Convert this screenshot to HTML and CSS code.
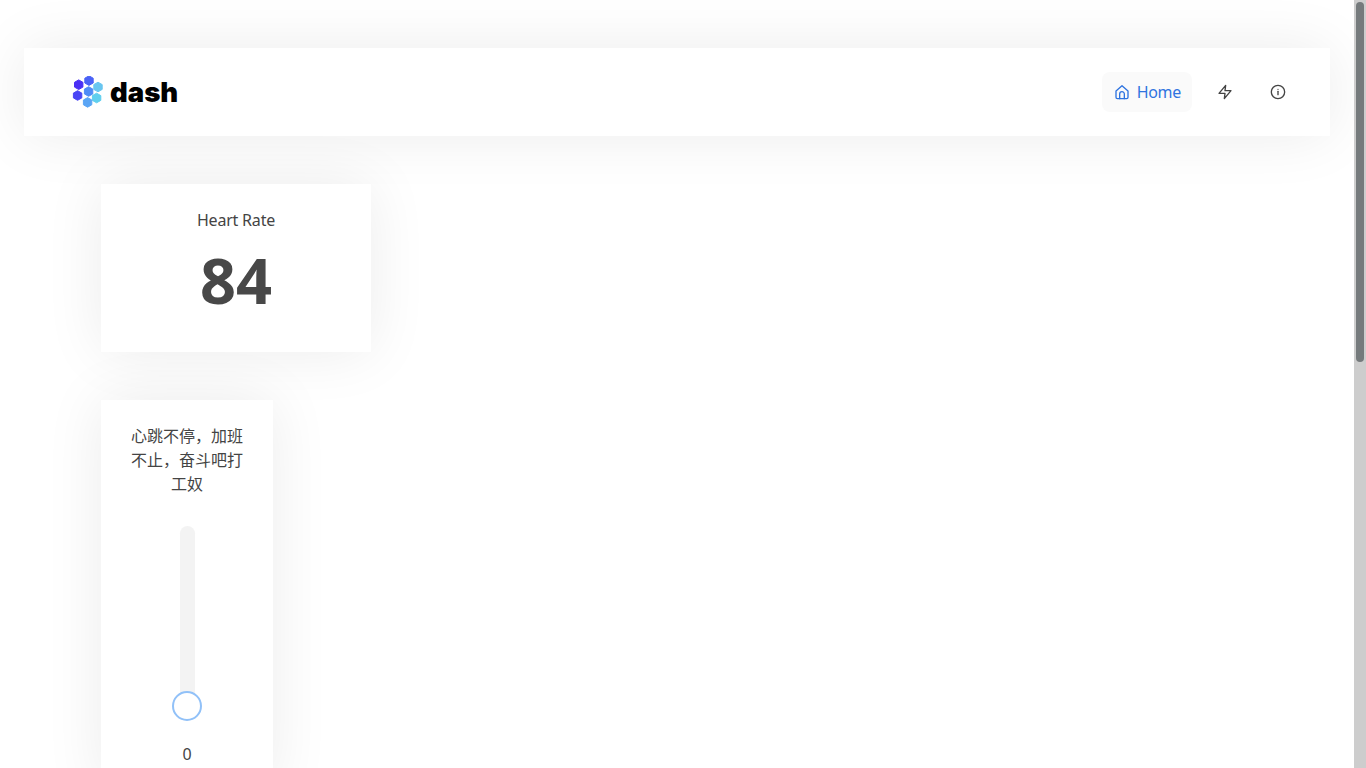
FILE: index.html
```html
<!DOCTYPE html>
<html lang="en">
<head>
  <meta charset="UTF-8">
  <meta name="viewport" content="width=device-width, initial-scale=1.0">
  <title>dash</title>
  <link rel="stylesheet" href="styles.css">
</head>
<body>
  <div class="page">
    <header class="navbar">
      <a class="brand" href="#">
        <svg class="brand-logo" width="32" height="32" viewBox="0 0 32 32">
          <defs>
            <polygon id="hex" points="0,-4.8 4.2,-2.4 4.2,2.4 0,4.8 -4.2,2.4 -4.2,-2.4" stroke-width="1" stroke-linejoin="round"/>
          </defs>
          <use href="#hex" x="6.7" y="8.7" fill="#4a2ff5" stroke="#4a2ff5"/>
          <use href="#hex" x="17" y="4.6" fill="#4a62f6" stroke="#4a62f6"/>
          <use href="#hex" x="26" y="11" fill="#69c6f0" stroke="#69c6f0"/>
          <use href="#hex" x="16.6" y="15.5" fill="#4f8cf6" stroke="#4f8cf6"/>
          <use href="#hex" x="5.6" y="19.5" fill="#4a45f5" stroke="#4a45f5"/>
          <use href="#hex" x="24.6" y="22" fill="#5fcfee" stroke="#5fcfee"/>
          <use href="#hex" x="15.6" y="26.4" fill="#5aa5f5" stroke="#5aa5f5"/>
        </svg>
        <span class="brand-name">dash</span>
      </a>
      <nav class="nav">
        <a class="nav-item active" href="#">
          <svg width="16" height="16" viewBox="0 0 24 24" fill="none" stroke="currentColor" stroke-width="2" stroke-linecap="round" stroke-linejoin="round">
            <path d="M3 10.5 12 2.5l9 8V20a2 2 0 0 1-2 2H5a2 2 0 0 1-2-2z"/>
            <path d="M8.5 22v-7a3.5 3.5 0 0 1 7 0v7"/>
          </svg>
          <span class="nav-label">Home</span>
        </a>
        <a class="nav-item icon-only" href="#">
          <svg width="16" height="16" viewBox="0 0 24 24" fill="none" stroke="currentColor" stroke-width="2" stroke-linecap="round" stroke-linejoin="round">
            <path d="M13 2 3 14h9l-1 8 10-12h-9l1-8z"/>
          </svg>
        </a>
        <a class="nav-item icon-only" href="#">
          <svg width="16" height="16" viewBox="0 0 24 24" fill="none" stroke="currentColor" stroke-width="2" stroke-linecap="round" stroke-linejoin="round">
            <circle cx="12" cy="12" r="10"/>
            <path d="M12 16v-5"/>
            <path d="M12 8h.01"/>
          </svg>
        </a>
      </nav>
    </header>

    <main class="content">
      <section class="card stat-card">
        <p class="card-title">Heart Rate</p>
        <p class="stat-value">84</p>
      </section>

      <section class="card slider-card">
        <p class="card-title">心跳不停，加班不止，奋斗吧打工奴</p>
        <div class="slider">
          <div class="slider-track"></div>
          <div class="slider-handle"></div>
        </div>
        <p class="slider-value">0</p>
      </section>
    </main>
  </div>

  <div class="scrollbar">
    <div class="scrollbar-thumb"></div>
  </div>
</body>
</html>
```

FILE: styles.css
```css
body {
  display: flex;
  margin: 0;
  height: 100vh;
  overflow: hidden;
  background: #fff;
  color: #444;
  font-family: "Noto Sans", "Noto Sans CJK SC", sans-serif;
  font-size: 16px;
  line-height: 24px;
}
p {
  margin: 0;
}
a {
  text-decoration: none;
  color: inherit;
}
.page {
  flex: 1;
  min-width: 0;
  padding: 48px 24px 0;
  overflow: hidden;
}
.scrollbar {
  flex: none;
  box-sizing: border-box;
  width: 12px;
  padding: 2px 2px 0;
  background: #cdcdcd;
}
.scrollbar-thumb {
  height: 360px;
  background: #757a7c;
  border-radius: 4px;
}
.navbar {
  display: flex;
  align-items: center;
  justify-content: space-between;
  height: 88px;
  padding: 0 32px 0 48px;
  background: #fff;
  box-shadow: 0 0 60px rgba(0,0,0,0.08);
}
.brand {
  display: flex;
  align-items: center;
  gap: 6px;
}
.brand-name {
  font-family: Inter, sans-serif;
  font-size: 27.5px;
  font-weight: 900;
  color: #000;
}
.nav {
  display: flex;
  align-items: center;
  gap: 13px;
}
.nav-item {
  display: flex;
  align-items: center;
  justify-content: center;
  gap: 7px;
  height: 40px;
  padding: 0 11px 0 12px;
  border-radius: 8px;
  color: #444;
}
.nav-label {
  letter-spacing: -0.3px;
}
.nav-item.active {
  background: #fafafa;
  color: #2f74e0;
}
.icon-only {
  width: 40px;
  padding: 0;
}
.content {
  display: flex;
  flex-direction: column;
  align-items: flex-start;
  gap: 48px;
  padding: 48px 0 0 77px;
}
.card {
  box-sizing: border-box;
  padding: 24px;
  background: #fff;
  text-align: center;
  box-shadow: 0 0 60px rgba(0,0,0,0.08);
}
.card-title {
  letter-spacing: -0.2px;
}
.slider-card .card-title {
  letter-spacing: 0;
}
.stat-card {
  width: 270px;
  height: 168px;
}
.stat-value {
  margin-top: 10px;
  font-size: 63px;
  line-height: 76px;
  font-weight: 700;
  color: #484848;
}
.slider-card {
  width: 172px;
}
.slider {
  position: relative;
  height: 195px;
  margin-top: 30px;
}
.slider-track {
  width: 15px;
  height: 180px;
  margin: 0 auto;
  background: #f3f3f3;
  border-radius: 8px;
}
.slider-handle {
  position: absolute;
  left: 47px;
  bottom: 0;
  box-sizing: border-box;
  width: 30px;
  height: 30px;
  background: #fff;
  border: 2px solid #91c1f8;
  border-radius: 50%;
}
.slider-value {
  margin-top: 21px;
}
```
